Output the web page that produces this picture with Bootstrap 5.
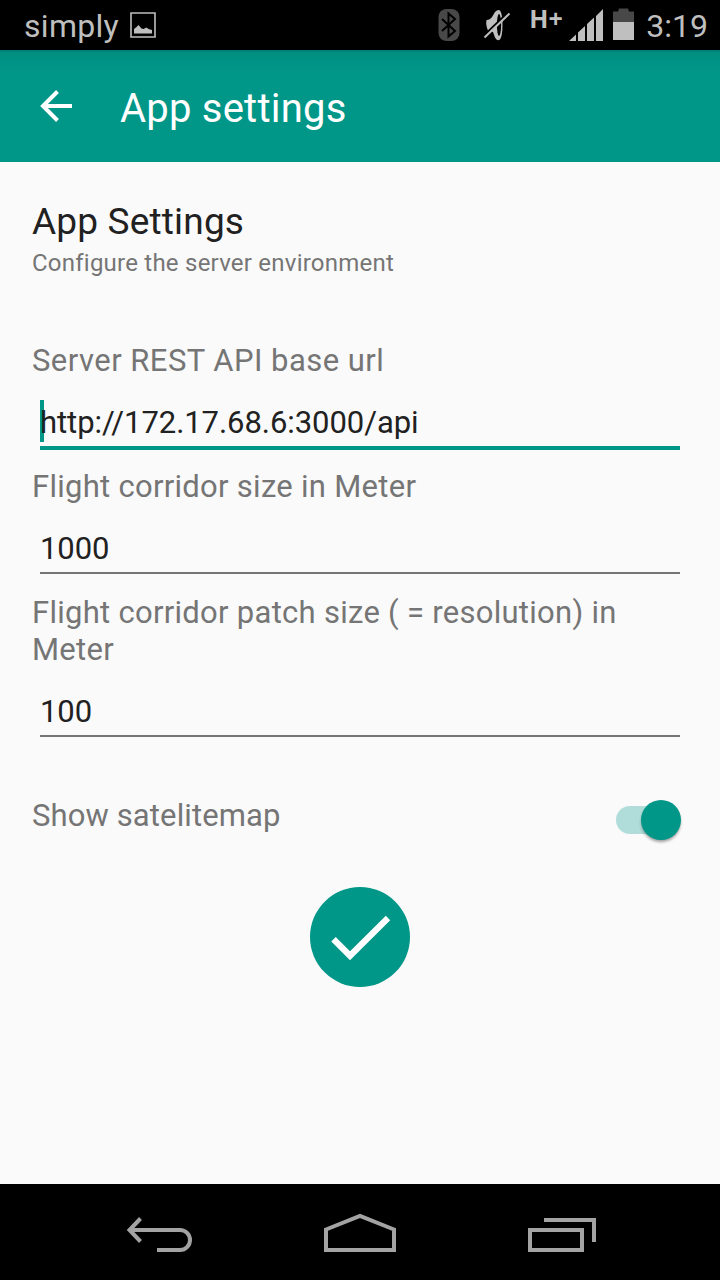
<!DOCTYPE html>
<html lang="en">
<head>
<meta charset="utf-8">
<meta name="viewport" content="width=device-width, initial-scale=1">
<title>App settings</title>
<link rel="stylesheet" href="https://cdn.jsdelivr.net/npm/bootstrap@5.3.0/dist/css/bootstrap.min.css">
<style>
  body { width: 720px; height: 1280px; overflow: hidden; background: #fafafa; font-family: Roboto, sans-serif; font-size: 31px; line-height: 37px; color: #212121; }
  svg { display: block; flex: none; }
  .status-bar { height: 50px; background: #000; color: #bfbfbf; padding: 0 12px 0 24px; font-size: 32px; }
  .carrier, .clock { line-height: 38px; padding-top: 1px; }
  .carrier { letter-spacing: .3px; }
  .picture-icon { margin-left: 11px; }
  .mute-icon { margin-left: 23px; }
  .battery-icon { margin-left: 10px; }
  .clock { margin-left: 12px; }
  .net-type { font-family: "Open Sans", Roboto, sans-serif; font-size: 25px; font-weight: 700; line-height: 30px; margin: 3px 5px 0 18px; width: 35px; }
  .app-bar { height: 112px; background: linear-gradient(#007d71, #008e80 3px, #009284 9px, #009688 22px); color: #fff; padding: 0 40px; }
  .app-title { font-size: 40px; line-height: 48px; letter-spacing: .22px; margin-left: 48px; padding-top: 6px; }
  .settings { padding: 38px 40px 0 32px; }
  .settings h2 { font-size: 37px; line-height: 44px; font-weight: 400; letter-spacing: .18px; }
  .subtitle { font-size: 24px; line-height: 28px; margin: 5px 0 65px; color: #757575; letter-spacing: .23px; }
  .field-label { color: #757575; display: block; letter-spacing: .28px; }
  .field-label.spaced { letter-spacing: .46px; }
  .field-label.tight { letter-spacing: .12px; }
  .field-box { position: relative; padding: 24px 0 0 8px; }
  .line-input { width: 640px; height: 45px; padding: 0 0 5px; border: 0; border-bottom: 2px solid #757575; border-radius: 0; background: transparent; font-size: 31px; line-height: 38px; letter-spacing: -.06px; color: #212121; display: block; outline: 0; position: relative; }
  .line-input.is-active { height: 47px; border-bottom: 4px solid #009688; }
  .caret { position: absolute; left: 8px; top: 21px; width: 4px; height: 42px; background: #009688; }
  .field-size { margin-top: 18px; }
  .field-patch { margin-top: 20px; }
  .switch-row { margin-top: 60px; height: 48px; }
  .switch-icon { margin-right: -4px; overflow: visible; }
  .confirm-row { margin: 42px 0 0 8px; }
  .confirm { width: 100px; height: 100px; background: #009688; border: 0; }
  .nav-keys { height: 96px; background: #000; padding: 0 124px 0 126px; }
  .nav-keys path { fill: none; stroke: #a3a3a3; stroke-width: 4; }
</style>
</head>
<body class="d-flex flex-column m-0">
<header class="status-bar d-flex align-items-center flex-shrink-0">
  <span class="carrier">simply</span>
  <svg class="picture-icon" width="26" height="26" viewBox="0 0 26 26"><path d="M1 1h24v24H1z" fill="none" stroke="#bfbfbf" stroke-width="1.600"/><path d="M4 21.500V17l2-1.500 2.500-2.500 3 3.500 2 .5 3-1.500 2 1.500 3.500 1v3.500z" fill="#bfbfbf"/></svg>
  <svg class="ms-auto" width="22" height="34" viewBox="0 0 22 34"><rect x=".5" y="1" width="21" height="32" rx="8" fill="#484848"/><path d="M4 11l13 12-6.500 5.500V5.500L17 11 4 23" fill="none" stroke="#000" stroke-width="2"/></svg>
  <svg class="mute-icon" width="28" height="34" viewBox="0 0 28 34"><path d="M3.500 12Q7 12 9 9l3-5q3-3 5-1.500Q19.500 6 19.500 17T17 31.500Q14 33.500 12 29.500L10 24 5 22.500Q2.500 17 3.500 12z" fill="#bfbfbf"/><ellipse cx="16" cy="17" rx="2.100" ry="11" fill="#000"/><path d="M1.500 27L26 3.500" stroke="#000" stroke-width="2"/><path d="M1.500 29.500L26.500 5.500" stroke="#bfbfbf" stroke-width="2"/></svg>
  <span class="net-type align-self-start">H+</span>
  <svg width="34" height="34" viewBox="0 0 34 34"><path d="M0 33L7 26.500V33zM9 33v-8.500l7-6.500v15zM18 33V16l7-6.500V33zM27 33V8l7-7v32z" fill="#bfbfbf"/></svg>
  <svg class="battery-icon" width="21" height="34" viewBox="0 0 21 34"><path d="M0 3.500h5l1-3h9l1 3h5V14H0z" fill="#484848"/><path d="M0 14h21v18H0z" fill="#bfbfbf"/></svg>
  <span class="clock">3:19</span>
</header>
<div class="app-bar navbar flex-nowrap justify-content-start flex-shrink-0">
  <svg width="32" height="32" viewBox="0 0 32 32"><path d="M17.500 1.500L3 16l14.500 14.500M2.500 16H32" fill="none" stroke="#fff" stroke-width="4"/></svg>
  <span class="app-title">App settings</span>
</div>
<main class="settings flex-grow-1">
  <h2 class="m-0">App Settings</h2>
  <div class="subtitle">Configure the server environment</div>
  <div>
    <label class="field-label spaced" for="url">Server REST API base url</label>
    <div class="field-box"><span class="caret"></span><input id="url" class="line-input is-active" value="http://172.17.68.6:3000/api"></div>
  </div>
  <div class="field-size">
    <label class="field-label" for="size">Flight corridor size in Meter</label>
    <div class="field-box"><input id="size" class="line-input" value="1000"></div>
  </div>
  <div class="field-patch">
    <label class="field-label" for="patch">Flight corridor patch size ( = resolution) in Meter</label>
    <div class="field-box"><input id="patch" class="line-input" value="100"></div>
  </div>
  <div class="switch-row d-flex justify-content-between">
    <span class="field-label tight">Show satelitemap</span>
    <svg class="switch-icon" width="68" height="48" viewBox="0 0 68 48"><defs><filter id="soft" x="-20%" y="-20%" width="140%" height="150%"><feGaussianBlur stdDeviation="1.800"/></filter></defs><rect y="9" width="60" height="28" rx="14" fill="#b0ddd9"/><circle cx="45" cy="25.500" r="19.500" fill="#000" opacity=".38" filter="url(#soft)"/><circle cx="45" cy="23" r="20" fill="#009688"/></svg>
  </div>
  <div class="confirm-row d-flex justify-content-center">
    <button class="confirm rounded-circle p-0" type="button" aria-label="Save"><svg width="100" height="100" viewBox="0 0 100 100"><path d="M23.500 52.300L40 68.700 78 31" fill="none" stroke="#fff" stroke-width="6.300"/></svg></button>
  </div>
</main>
<nav class="nav-keys d-flex justify-content-between align-items-center flex-shrink-0">
  <svg width="66" height="48" viewBox="0 0 66 48"><path d="M14.500 10.500L3.500 22l11 11.500M3 22h51a10 10 0 0 1 0 20H31"/></svg>
  <svg width="72" height="48" viewBox="0 0 72 48"><path d="M2 21.500L36 8l34 13.500V42H2z"/></svg>
  <svg width="68" height="48" viewBox="0 0 68 48"><path d="M2 22h52v20H2zM16 12h50v22"/></svg>
</nav>
<script src="https://cdn.jsdelivr.net/npm/bootstrap@5.3.0/dist/js/bootstrap.bundle.min.js"></script>
</body>
</html>
